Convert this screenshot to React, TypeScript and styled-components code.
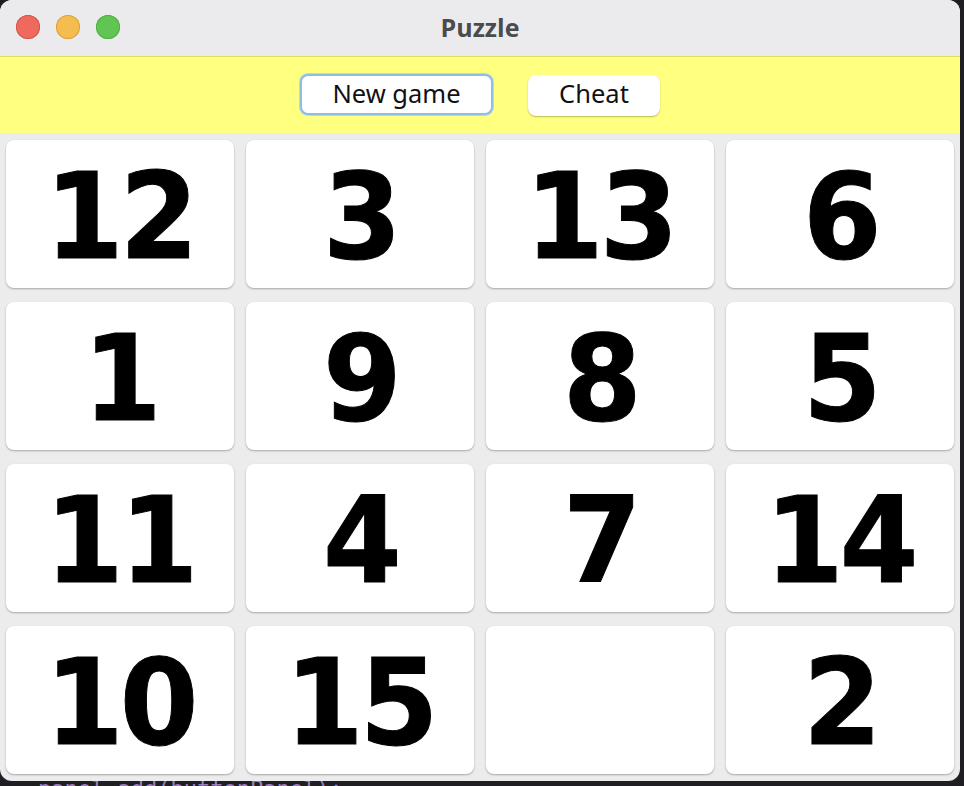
import React from "react";
import styled, { createGlobalStyle } from "styled-components";

const GlobalStyle = createGlobalStyle`
  html, body {
    margin: 0;
    padding: 0;
    background: #1f1f23;
    overflow: hidden;
  }
`;

const tiles: (number | null)[] = [12, 3, 13, 6, 1, 9, 8, 5, 11, 4, 7, 14, 10, 15, null, 2];

const Desk = styled.div`
  width: 964px;
  height: 786px;
  overflow: hidden;
  display: flex;
  flex-direction: column;
`;

const Window = styled.div`
  width: 960px;
  height: 781px;
  border-radius: 12px;
  overflow: hidden;
  background: #ececec;
  display: flex;
  flex-direction: column;
  flex-shrink: 0;
`;

const TitleBar = styled.div`
  height: 56px;
  background: #ebebed;
  display: flex;
  align-items: center;
  position: relative;
`;

const Lights = styled.div`
  display: flex;
  gap: 16px;
  padding-left: 16px;
  padding-bottom: 2px;
`;

const Light = styled.span<{ $fill: string; $edge: string }>`
  width: 24px;
  height: 24px;
  border-radius: 50%;
  background: ${({ $fill }) => $fill};
  box-shadow: inset 0 0 0 1px ${({ $edge }) => $edge};
`;

const Title = styled.div`
  position: absolute;
  left: 0;
  right: 0;
  top: 0;
  bottom: 0;
  display: flex;
  align-items: center;
  justify-content: center;
  font-family: "Open Sans", "Noto Sans", sans-serif;
  font-weight: 700;
  font-size: 25px;
  color: #4b4b4d;
  padding-bottom: 3px;
`;

const Toolbar = styled.div`
  height: 76px;
  background: #ffff80;
  border-top: 1px solid #e2dc5c;
  display: flex;
  align-items: center;
  justify-content: center;
  gap: 35px;
`;

const Button = styled.button<{ $focused?: boolean }>`
  height: 41px;
  padding: 0 0 4px 0;
  width: ${({ $focused }) => ($focused ? "193px" : "132px")};
  background: #ffffff;
  border: ${({ $focused }) => ($focused ? "2px solid #8fbee3" : "none")};
  border-radius: 8px;
  box-shadow: ${({ $focused }) =>
    $focused ? "0 0 0 1px #b8d6ee" : "0 1px 1.5px rgba(0,0,0,0.28)"};
  font-family: "Noto Sans", "Open Sans", sans-serif;
  font-size: 25.5px;
  color: #111;
  display: flex;
  align-items: center;
  justify-content: center;
  margin-top: ${({ $focused }) => ($focused ? "-1px" : "0")};
`;

const Board = styled.div`
  flex: 1;
  display: grid;
  grid-template-columns: repeat(4, 228px);
  grid-template-rows: repeat(4, 148px);
  column-gap: 12px;
  row-gap: 14px;
  padding: 7px 6px 0 6px;
`;

const Tile = styled.div`
  background: #ffffff;
  border-radius: 8px;
  box-shadow: 0 1px 2px rgba(0, 0, 0, 0.3);
  display: flex;
  align-items: center;
  justify-content: center;
`;

const Digits = styled.span`
  font-family: "DejaVu Sans", Verdana, sans-serif;
  font-weight: 700;
  font-size: 119px;
  color: #000;
  line-height: 1;
  padding-top: 6px;
  letter-spacing: -4px;
  transform: scaleX(0.95);
  display: inline-block;
  -webkit-text-stroke: 1px #000;
`;

const CodePeek = styled.div`
  height: 5px;
  overflow: hidden;
  padding-left: 38px;
  font-family: "DejaVu Sans Mono", monospace;
  font-size: 22px;
  line-height: 20px;
  color: #9d7fbf;
  white-space: pre;
`;

const CodeLine = styled.span`
  position: relative;
  top: -2px;
`;

export default function App() {
  return (
    <Desk>
      <GlobalStyle />
      <Window>
        <TitleBar>
          <Lights>
            <Light $fill="#ee6a5f" $edge="#d5554b" />
            <Light $fill="#f5bd4f" $edge="#d9a13c" />
            <Light $fill="#61c554" $edge="#4fae44" />
          </Lights>
          <Title>Puzzle</Title>
        </TitleBar>
        <Toolbar>
          <Button $focused>New game</Button>
          <Button>Cheat</Button>
        </Toolbar>
        <Board>
          {tiles.map((n, i) => (
            <Tile key={i}>{n !== null && <Digits>{n}</Digits>}</Tile>
          ))}
        </Board>
      </Window>
      <CodePeek>
        <CodeLine>panel.add(buttonPanel);</CodeLine>
      </CodePeek>
    </Desk>
  );
}
